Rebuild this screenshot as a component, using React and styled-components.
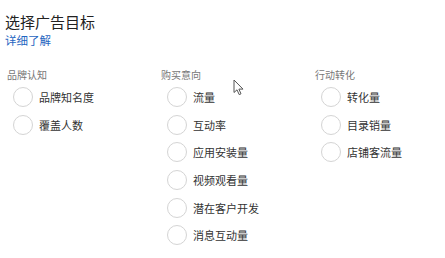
import styled, { createGlobalStyle } from 'styled-components';

const GlobalStyle = createGlobalStyle`
  html, body {
    margin: 0;
    background: #ffffff;
  }
  body {
    font-family: "Noto Sans CJK SC", "Liberation Sans", sans-serif;
  }
`;

const Page = styled.div`
  position: relative;
  width: 445px;
  height: 258px;
  padding: 12px 0 0 5px;
  box-sizing: border-box;
  overflow: hidden;
  background: #fff;
`;

const Title = styled.h1`
  margin: 0;
  font-size: 15px;
  line-height: 20px;
  font-weight: 400;
  color: #222;
`;

const MoreLink = styled.a`
  display: block;
  margin-top: 1px;
  font-size: 11.5px;
  line-height: 14px;
  color: #1f66c1;
  text-decoration: none;
`;

const Columns = styled.div`
  display: grid;
  grid-template-columns: repeat(3, 154px);
  margin-top: 21px;
  padding-left: 2px;
`;

const Column = styled.div`
  display: flex;
  flex-direction: column;
`;

const GroupLabel = styled.div`
  font-size: 10px;
  line-height: 14px;
  color: #777;
  margin-bottom: 1px;
`;

const Option = styled.label`
  display: flex;
  align-items: center;
  gap: 6px;
  height: 27.7px;
  padding-left: 6px;
  font-size: 11px;
  color: #333;
`;

const Radio = styled.span`
  width: 18px;
  height: 18px;
  border: 1px solid #d4d4d4;
  border-radius: 50%;
  background: #fff;
  flex-shrink: 0;
`;

const Cursor = styled.svg`
  position: absolute;
  left: 233px;
  top: 79px;
`;

const groups = [
  { name: '品牌认知', items: ['品牌知名度', '覆盖人数'] },
  {
    name: '购买意向',
    items: ['流量', '互动率', '应用安装量', '视频观看量', '潜在客户开发', '消息互动量'],
  },
  { name: '行动转化', items: ['转化量', '目录销量', '店铺客流量'] },
];

export default function App() {
  return (
    <>
      <GlobalStyle />
      <Page>
        <Title>选择广告目标</Title>
        <MoreLink href="#">详细了解</MoreLink>
        <Columns>
          {groups.map((g) => (
            <Column key={g.name}>
              <GroupLabel>{g.name}</GroupLabel>
              {g.items.map((item) => (
                <Option key={item}>
                  <Radio />
                  {item}
                </Option>
              ))}
            </Column>
          ))}
        </Columns>
        <Cursor width="12" height="17" viewBox="0 0 12 17">
          <path
            d="M1 1 L1 13.5 L4 10.8 L6.2 15.6 L8 14.8 L5.9 10.1 L10 10.1 Z"
            fill="#fff"
            stroke="#555"
            strokeWidth="1"
            strokeLinejoin="round"
          />
        </Cursor>
      </Page>
    </>
  );
}
